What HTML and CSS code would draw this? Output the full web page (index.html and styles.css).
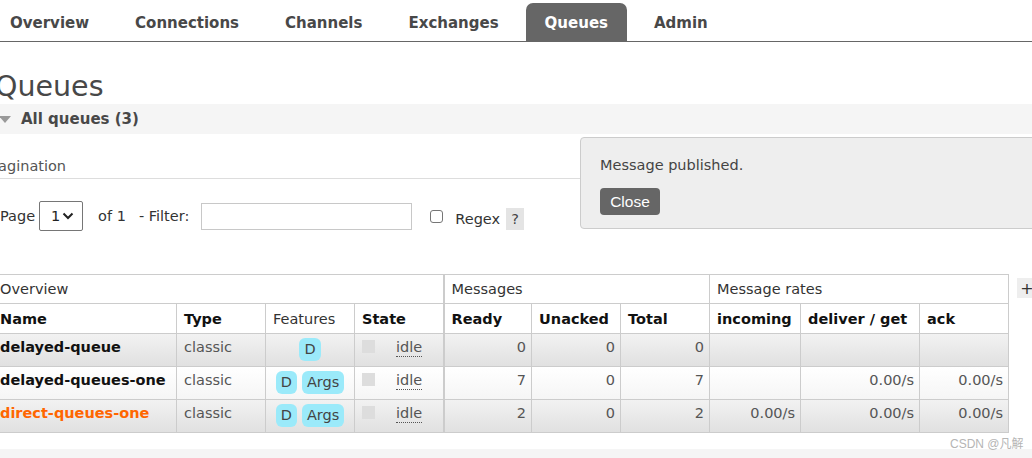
FILE: index.html
```html
<!DOCTYPE html>
<html>
<head>
<meta charset="utf-8">
<link rel="stylesheet" href="styles.css">
</head>
<body>
<nav class="tabs">
  <ul>
    <li><a>Overview</a></li>
    <li><a>Connections</a></li>
    <li><a>Channels</a></li>
    <li><a>Exchanges</a></li>
    <li class="active"><a>Queues</a></li>
    <li><a>Admin</a></li>
  </ul>
</nav>

<main class="main">
  <h1 class="title">Queues</h1>

  <div class="section-head"><span class="tri"></span><span>All queues (3)</span></div>

  <h3 class="pag-title">Pagination</h3>

  <div class="pag-row">
    <span class="lbl">Page</span>
    <div class="select"><span>1</span>
      <svg width="12" height="8" viewBox="0 0 12 8"><path d="M1.5 1.5 L6 6 L10.5 1.5" fill="none" stroke="#222" stroke-width="2"/></svg>
    </div>
    <span class="lbl of">of 1</span>
    <span class="lbl filter">- Filter:</span>
    <div class="input"></div>
    <span class="check"></span>
    <span class="lbl regex">Regex</span>
    <span class="help">?</span>
  </div>

  <div class="table-wrap">
    <table class="queues">
      <colgroup>
        <col class="c-name"><col class="c-type"><col class="c-feat"><col class="c-state">
        <col class="c-ready"><col class="c-unack"><col class="c-total">
        <col class="c-inc"><col class="c-del"><col class="c-ack">
      </colgroup>
      <thead>
        <tr class="group">
          <th colspan="4" class="first">Overview</th>
          <th colspan="3" class="sep">Messages</th>
          <th colspan="3">Message rates</th>
        </tr>
        <tr class="cols">
          <th class="first">Name</th><th>Type</th><th class="norm">Features</th><th>State</th>
          <th class="sep">Ready</th><th>Unacked</th><th>Total</th>
          <th>incoming</th><th>deliver / get</th><th>ack</th>
        </tr>
      </thead>
      <tbody>
        <tr class="alt">
          <td class="name first">delayed-queue</td>
          <td class="type">classic</td>
          <td class="feat"><span class="badge">D</span></td>
          <td class="state"><span class="sq"></span><abbr>idle</abbr></td>
          <td class="num sep">0</td><td class="num">0</td><td class="num">0</td>
          <td class="num"></td><td class="num"></td><td class="num"></td>
        </tr>
        <tr>
          <td class="name first">delayed-queues-one</td>
          <td class="type">classic</td>
          <td class="feat"><span class="badge">D</span><span class="badge">Args</span></td>
          <td class="state"><span class="sq"></span><abbr>idle</abbr></td>
          <td class="num sep">7</td><td class="num">0</td><td class="num">7</td>
          <td class="num"></td><td class="num">0.00/s</td><td class="num">0.00/s</td>
        </tr>
        <tr class="alt">
          <td class="name first hot">direct-queues-one</td>
          <td class="type">classic</td>
          <td class="feat"><span class="badge">D</span><span class="badge">Args</span></td>
          <td class="state"><span class="sq"></span><abbr>idle</abbr></td>
          <td class="num sep">2</td><td class="num">0</td><td class="num">2</td>
          <td class="num">0.00/s</td><td class="num">0.00/s</td><td class="num">0.00/s</td>
        </tr>
      </tbody>
    </table>
    <span class="plus">+</span>
  </div>

  <div class="section-head bottom"><span class="tri"></span><span>Add a new queue</span></div>
</main>

<div class="popup">
  <p>Message published.</p>
  <button class="close">Close</button>
</div>

<div class="watermark">CSDN @凡解</div>
</body>
</html>
```

FILE: styles.css
```css
html, body {
  margin: 0;
  padding: 0;
  overflow: hidden;
  width: 1032px;
  height: 458px;
  background: #fff;
}
body {
  font-family: "DejaVu Sans", Verdana, sans-serif;
  color: #484848;
  font-size: 14px;
  position: relative;
}

/* nav */
.tabs {
  border-bottom: 1px solid #666;
  height: 41px;
}
.tabs ul {
  list-style: none;
  margin: 0;
  padding: 3px 0 0 0;
  display: flex;
  margin-left: -9px;
  gap: 8px;
}
.tabs li a {
  display: block;
  height: 38px;
  line-height: 38px;
  padding: 1px 19px 0 19px;
  box-sizing: border-box;
  font-weight: bold;
  font-size: 15px;
  color: #484848;
  border-radius: 7px 7px 0 0;
}
.tabs li.active a {
  background: #666;
  color: #fff;
}

/* title */
.title {
  font-size: 28.5px;
  font-weight: normal;
  line-height: 32px;
  margin: 29px 0 1px -5px;
  color: #484848;
}

.section-head {
  background: #f5f5f5;
  height: 30px;
  display: flex;
  align-items: center;
  font-weight: bold;
  font-size: 15px;
  color: #484848;
}
.section-head .tri {
  width: 0;
  height: 0;
  border-left: 6px solid transparent;
  border-right: 6px solid transparent;
  border-top: 7px solid #999;
  margin: 1px 10px 0 -1px;
}
.section-head.bottom {
  margin-top: 16px;
  align-items: flex-start;
  padding-top: 8px;
  box-sizing: border-box;
}
.section-head.bottom .tri { margin-top: 6px; }

.pag-title {
  font-weight: normal;
  font-size: 14.5px;
  line-height: 18px;
  margin: 23px 0 0 -10px;
  padding-bottom: 3px;
  border-bottom: 1px solid #ddd;
  color: #555;
}

.pag-row {
  display: flex;
  align-items: center;
  height: 30px;
  margin-top: 22px;
  font-size: 14.5px;
  color: #333;
}
.pag-row .lbl { white-space: nowrap; }
.select {
  border: 1px solid #767676;
  border-radius: 2px;
  margin-left: 4px;
  display: flex;
  align-items: center;
  justify-content: space-between;
  padding: 0 8px 0 11px;
  box-sizing: border-box;
  width: 44px;
  height: 30px;
  color: #222;
}
.pag-row .of { margin-left: 15px; }
.pag-row .filter { margin-left: 13px; }
.input {
  width: 211px;
  height: 27px;
  box-sizing: border-box;
  border: 1px solid #c8c8c8;
  margin-left: 12px;
}
.check {
  width: 13px;
  height: 13px;
  box-sizing: border-box;
  border: 1px solid #767676;
  border-radius: 3px;
  margin-left: 18px;
}
.pag-row .regex { margin-left: 12px; margin-top: 6px; }
.help {
  width: 18px;
  height: 22px;
  background: #e4e4e4;
  margin-left: 6px;
  margin-top: 6px;
  display: flex;
  align-items: center;
  justify-content: center;
  color: #444;
}

/* table */
.table-wrap {
  display: flex;
  align-items: flex-start;
  margin-top: 43px;
  margin-left: -7px;
}
.queues {
  border-collapse: collapse;
  table-layout: fixed;
  width: 1015px;
  font-size: 14.5px;
}
.c-name { width: 183px; }
.c-type { width: 89px; }
.c-feat { width: 89px; }
.c-state { width: 89px; }
.c-ready { width: 88px; }
.c-unack { width: 89px; }
.c-total { width: 89px; }
.c-inc { width: 91px; }
.c-del { width: 119px; }
.c-ack { width: 89px; }

.queues th, .queues td {
  border: 1px solid #ccc;
  padding: 0 5px 0 7px;
  white-space: nowrap;
  overflow: hidden;
}
.queues .first { padding-left: 6px; }
.queues th {
  text-align: left;
  color: #111;
}
.queues tr.group th {
  font-weight: normal;
  height: 28px;
  color: #333;
}
.queues tr.cols th {
  height: 29px;
  font-weight: bold;
}
.queues tr.cols th.norm { font-weight: normal; color: #333; }
.queues .sep { border-left: 2px solid #ccc; }

.queues tbody tr {
  height: 33px;
  background: linear-gradient(#ffffff, #f5f5f5);
}
.queues tbody tr.alt {
  background: linear-gradient(#f2f2f2, #e0e0e0);
}
.queues td {
  vertical-align: top;
  padding-top: 3px;
  height: 29px;
  line-height: 21px;
  color: #555;
}
.queues td.name { font-weight: bold; color: #111; }
.queues td.name.hot { color: #f60; }
.queues td.num { text-align: right; }
.queues td.feat { text-align: center; padding-left: 5px; }
.badge {
  display: inline-block;
  background: #9beafa;
  border-radius: 6px;
  padding: 0 5px;
  height: 23px;
  line-height: 23px;
  margin-top: 1px;
  color: #444;
}
.badge + .badge { margin-left: 5px; }
.state .sq {
  display: inline-block;
  width: 13px;
  height: 13px;
  background: #ddd;
  vertical-align: top;
  margin-top: 3px;
}
.state abbr {
  margin-left: 21px;
  text-decoration: none;
  border-bottom: 1px dotted #555;
  line-height: 18px;
  display: inline-block;
}
.plus {
  margin-left: 8px;
  margin-top: 4px;
  width: 20px;
  height: 20px;
  background: #eee;
  color: #333;
  display: flex;
  align-items: center;
  justify-content: center;
  font-size: 16px;
  flex: none;
}

/* popup */
.popup {
  position: absolute;
  left: 580px;
  top: 137px;
  width: 520px;
  height: 92px;
  box-sizing: border-box;
  background: #eee;
  border: 1px solid #ccc;
  border-radius: 4px;
  padding: 17px 19px;
}
.popup p {
  margin: 0;
  font-size: 14.5px;
  line-height: 20px;
  color: #444;
}
.close {
  margin-top: 13px;
  background: #666;
  color: #fff;
  border: none;
  border-radius: 4px;
  font-family: "Liberation Sans", Arial, sans-serif;
  font-size: 15.5px;
  width: 60px;
  height: 27px;
  padding: 0;
}

.watermark {
  position: absolute;
  left: 950px;
  top: 434px;
  font-family: "Liberation Sans", "Noto Sans CJK SC", sans-serif;
  font-size: 12px;
  color: #b5b5b5;
}
```
